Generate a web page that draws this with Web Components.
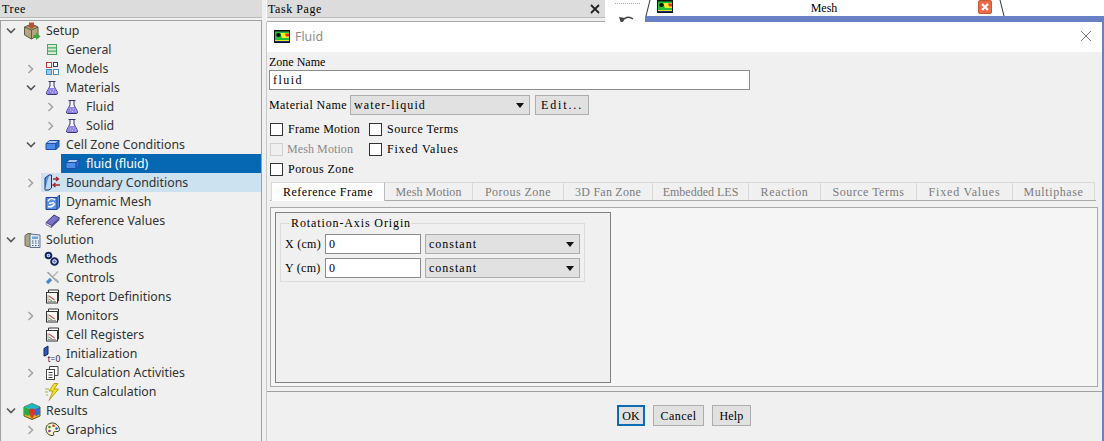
<!DOCTYPE html>
<html>
<head>
<meta charset="utf-8">
<title>Fluid</title>
<style>
  html, body { margin: 0; padding: 0; width: 1104px; height: 441px; overflow: hidden; background: #f0f0f0; }
</style>
</head>
<body>
<app-shell>
  <tree-panel slot="tree">
    <tree-row level="0" open icon="setup">Setup</tree-row>
    <tree-row level="1" icon="general">General</tree-row>
    <tree-row level="1" closed icon="models">Models</tree-row>
    <tree-row level="1" open icon="flask">Materials</tree-row>
    <tree-row level="2" closed icon="flask">Fluid</tree-row>
    <tree-row level="2" closed icon="flask">Solid</tree-row>
    <tree-row level="1" open icon="zone">Cell Zone Conditions</tree-row>
    <tree-row level="2" selected icon="zone">fluid (fluid)</tree-row>
    <tree-row level="1" closed hover icon="boundary">Boundary Conditions</tree-row>
    <tree-row level="1" icon="dynamic">Dynamic Mesh</tree-row>
    <tree-row level="1" icon="book">Reference Values</tree-row>
    <tree-row level="0" open icon="solution">Solution</tree-row>
    <tree-row level="1" icon="methods">Methods</tree-row>
    <tree-row level="1" icon="controls">Controls</tree-row>
    <tree-row level="1" icon="report">Report Definitions</tree-row>
    <tree-row level="1" closed icon="report">Monitors</tree-row>
    <tree-row level="1" icon="report">Cell Registers</tree-row>
    <tree-row level="1" icon="init">Initialization</tree-row>
    <tree-row level="1" closed icon="activities">Calculation Activities</tree-row>
    <tree-row level="1" icon="run">Run Calculation</tree-row>
    <tree-row level="0" open icon="results">Results</tree-row>
    <tree-row level="1" closed icon="graphics">Graphics</tree-row>
  </tree-panel>
  <top-strip slot="strip"></top-strip>
  <fluid-dialog slot="dialog"></fluid-dialog>
</app-shell>

<script>
// the reference uses a 6px-per-char bitmap serif, so stretch the serif to that pitch
const monoFont = '12px "Liberation Serif"';
const monoCss = `font: 12px/14px "Liberation Serif", serif;`;
const ctx = document.createElement('canvas').getContext('2d');
ctx.font = monoFont;
function fitMono(el) {
  const text = el.textContent.trim();
  if (!text) return;
  const spacing = (text.length * 6 - ctx.measureText(text).width) / text.length;
  el.style.letterSpacing = Math.max(spacing, 0).toFixed(3) + 'px';
}

const contourBody = `<rect width="16" height="13" fill="#10131a"/><rect x="1" y="1.500" width="14" height="8.500" fill="#1fbf3a"/><path d="M6 3h9v5H8z" fill="#f2ee1d"/><path d="M11 3.500h4v3h-3z" fill="#e8301c"/><ellipse cx="4.500" cy="5" rx="2.300" ry="2" fill="#0b0b0b"/><rect x="1" y="10" width="14" height="1" fill="#e6e61d"/><rect x="1" y="11" width="14" height="1" fill="#16267a"/>`;
const contour = `<svg width="16" height="13" viewBox="0 0 16 13">${contourBody}</svg>`;

const icons = {
  setup: `<svg width="18" height="18" viewBox="0 0 18 18"><path d="M1.500 5L8.500 2 15 5v8l-6.500 4L1.500 13z" fill="#b5a582" stroke="#5f5a44"/><path d="M1.500 5l7 3 6.500-3M8.500 8v9" fill="none" stroke="#5f5a44"/><path d="M6 .5h5v3h2L8.500 7 4 3.500h2z" fill="#b9502f"/><path d="M10.500 13H13v-2.500l4.500 4-4.500 3.500V16h-2.500z" fill="#3aa63c"/></svg>`,
  general: `<svg width="12" height="13" viewBox="0 0 12 13"><rect x="1.500" y="1.500" width="9" height="10" fill="#d9ecd8" stroke="#4da563"/><path d="M1.500 4.800h9M1.500 8.200h9" stroke="#4da563" stroke-width="1.200"/></svg>`,
  models: `<svg width="13" height="13" viewBox="0 0 13 13"><rect x=".5" y=".5" width="5" height="5" fill="#fff" stroke="#cf3d3d"/><rect x="7.500" y=".5" width="4" height="4" fill="#fff" stroke="#34396e"/><rect x=".5" y="7.500" width="5" height="5" fill="#9cc9ea" stroke="#3d8fd0"/><rect x="7.500" y="7.500" width="5" height="5" fill="#fff" stroke="#3d8fd0"/></svg>`,
  flask: `<svg width="14" height="16" viewBox="0 0 14 16"><path d="M3.500 1.500h7M5 1.500V6L1.500 12.500q-.5 2 1.500 2h8q2 0 1.500-2L9 6V1.500" fill="#f4f2ff" stroke="#34346a"/><path d="M3.800 8h6.400l2.200 5q0 1-1.200 1H3q-1.200 0-1.200-1z" fill="#8f83e8"/><path d="M5 11h.8M8 10h.8M7 12.500h.8M10 12h.8" stroke="#e9e6ff"/></svg>`,
  zone: `<svg width="15" height="12" viewBox="0 0 15 12"><path d="M1 4.500L4.500 1.500H14L11 4.500z" fill="#a9c8f5" stroke="#1e4fa8"/><path d="M1 4.500h10v6H1z" fill="#4d8de8" stroke="#1e4fa8"/><path d="M11 4.500L14 1.500v6l-3 3z" fill="#2f6ed0" stroke="#1e4fa8"/></svg>`,
  boundary: `<svg width="17" height="17" viewBox="0 0 17 17"><path d="M1 4l4-3v12l-4 3z" fill="#5a94e4" stroke="#17306e"/><path d="M5 1h2.500v13L5 16H1" fill="#bcd4f2" stroke="#17306e"/><path d="M9 5h5M12 3l2.500 2-2.500 2M9 11h7M11.500 9L9 11l2.500 2" fill="none" stroke="#a8262c" stroke-width="1.400"/></svg>`,
  dynamic: `<svg width="15" height="16" viewBox="0 0 15 16"><path d="M1 3.500h11L14.500 1v12L12 15.500H1z" fill="#5b8fe6" stroke="#1d3f95"/><path d="M12 3.500v12" stroke="#1d3f95"/><path d="M3 7c2-3 5-3 7-1M3 12.500c3 1 5 0 7-3M4 9.500l5-1" fill="none" stroke="#fff" stroke-width="1.400"/></svg>`,
  book: `<svg width="15" height="14" viewBox="0 0 15 14"><path d="M1 8.500L9 1l5.500 3-8 7.500z" fill="#7c74c8" stroke="#3f3a80"/><path d="M1 8.500l5.500 3v2L1 10.500z" fill="#eeecf8" stroke="#3f3a80" stroke-width=".7"/><path d="M6.500 11.500l8-7.500v2l-8 7.500z" fill="#4f4a90"/></svg>`,
  solution: `<svg width="17" height="16" viewBox="0 0 17 16"><path d="M1 3.500q3-3 6-2V14q-3 1.500-6-.5z" fill="#a9a48a" stroke="#6d6a50"/><path d="M6 2l10 1v12.500H6z" fill="#e4ecf4" stroke="#5f7085"/><path d="M8 4.500h6V7H8z" fill="#6fa8d8"/><path d="M8 9h1.500M11 9h1.500M14 9h1M8 11h1.500M11 11h1.500M14 11h1M8 13.500h1.500M11 13.500h1.500M14 13.500h1" stroke="#3f5f8a" stroke-width="1.200"/></svg>`,
  methods: `<svg width="16" height="16" viewBox="0 0 16 16"><g fill="#fff" stroke="#14245f" stroke-width="2"><circle cx="4.500" cy="4.500" r="2.800"/><circle cx="10.500" cy="10.500" r="3.300"/></g><circle cx="4.500" cy="4.500" r="1" fill="#3f6ad8"/><circle cx="10.500" cy="10.500" r="1.300" fill="#3f6ad8"/></svg>`,
  controls: `<svg width="15" height="15" viewBox="0 0 15 15"><path d="M2.500 2l9 9" stroke="#9a9a9a" stroke-width="1.500"/><path d="M13 1.500L8 6.500" stroke="#b5b5b5" stroke-width="1.500"/><path d="M2 13l4-4" stroke="#4a86c8" stroke-width="3.200"/><path d="M10 9l3.500 3.500" stroke="#a8a8a8" stroke-width="2"/></svg>`,
  report: `<svg width="15" height="15" viewBox="0 0 15 15"><path d="M3.500 3.500V1h10v11h-1" fill="#fff" stroke="#333"/><rect x="1.500" y="3.500" width="11" height="10.500" fill="#fbf9f4" stroke="#333"/><path d="M3 6v6.500h8" fill="none" stroke="#777" stroke-width=".7"/><path d="M4 7l5.500 4" stroke="#d6464a" stroke-width="1.100"/><path d="M4 10l3 2" stroke="#4aa052"/></svg>`,
  init: `<svg width="18" height="18" viewBox="0 0 18 18"><path d="M1 3.500L5 1v8L2 11H1z" fill="#2a58c4" stroke="#14245f"/><text x="4.500" y="17" font-family="Noto Sans" font-size="8.500" fill="#1a2a55">t=0</text></svg>`,
  activities: `<svg width="14" height="14" viewBox="0 0 14 14"><path d="M4.500 3.500v-3h8.500v9H9.500" fill="#fff" stroke="#444"/><rect x="1.500" y="3.500" width="8" height="10" fill="#fff" stroke="#444"/><path d="M3.500 6.500h4M3.500 9h4M3.500 11.500h4" stroke="#444"/></svg>`,
  run: `<svg width="16" height="18" viewBox="0 0 16 18"><path d="M10 .5L5 8h4l-4 9.500L14.500 6H10l4-5.500z" fill="#f5e11d" stroke="#a8900f" stroke-width=".8"/><path d="M1 6h4M1 9h3M2 12h2" stroke="#b5a84a"/></svg>`,
  results: `<svg width="18" height="18" viewBox="0 0 18 18"><path d="M1 5l8-3.500L17 5v9l-8 3.500L1 14z" fill="#e8b21d" stroke="#5a5a2a"/><path d="M1 5l8-3.500L17 5 9 8z" fill="#1fb8c9"/><path d="M1 5l8 3v3L5 14 1 12z" fill="#2cab44"/><path d="M17 5L9 8v3l4 3 4-2z" fill="#2a6de0"/><circle cx="9" cy="9.500" r="3" fill="#e5301f"/><path d="M6 12l3 5 3-5z" fill="#d4471c"/></svg>`,
  graphics: `<svg width="15" height="15" viewBox="0 0 15 15"><path d="M7.500 1C3 1 1 4 1 7c0 4 3 6.500 6 6.500 2 0 2-1 1.500-2-.4-1 .5-2 2-2h1.500c1.500 0 2.500-.5 2.500-2C14 4 11 1 7.500 1z" fill="#fbf4cc" stroke="#2d3a1e"/><circle cx="4.500" cy="5" r="1.300" fill="#2c8f3a"/><circle cx="8.500" cy="3.800" r="1.300" fill="#d33a2c"/><circle cx="11.500" cy="6.500" r="1.200" fill="#2a55c8"/><circle cx="4.500" cy="9" r="1.300" fill="#7a3ba8"/></svg>`
};

class AppShell extends HTMLElement {
  constructor() {
    super();
    this.attachShadow({mode: 'open'}).innerHTML = `
      <style>
        :host { display: grid; grid-template-columns: 266px 838px; grid-template-rows: 22px 419px; width: 1104px; height: 441px; background: #f0f0f0; overflow: hidden; }
        .left { grid-row: 1 / 3; min-height: 0; }
        .strip, .dlg { min-width: 0; min-height: 0; }
      </style>
      <div class="left"><slot name="tree"></slot></div>
      <div class="strip"><slot name="strip"></slot></div>
      <div class="dlg"><slot name="dialog"></slot></div>`;
  }
}

class TreePanel extends HTMLElement {
  constructor() {
    super();
    this.attachShadow({mode: 'open'}).innerHTML = `
      <style>
        :host { display: flex; flex-direction: column; height: 441px; }
        .head { height: 17px; margin-right: 4px; background: #dcdcdc; border-bottom: 1px solid #b9b9b9; padding-left: 2px; display: flex; align-items: center; }
        .body { flex: 1; margin: 2px 4px 0 0; background: #f0f0f0; border: 1px solid #a0a0a0; border-bottom: 0; overflow: hidden; }
      </style>
      <div class="head"><mono-label>Tree</mono-label></div>
      <div class="body"><slot></slot></div>`;
  }
}

class TreeRow extends HTMLElement {
  constructor() {
    super();
    const level = +this.getAttribute('level');
    const arrow = this.hasAttribute('open')
      ? `<svg width="10" height="8" viewBox="0 0 10 8"><path d="M1 1.500l4 4 4-4" fill="none" stroke="#555" stroke-width="1.600"/></svg>`
      : this.hasAttribute('closed')
        ? `<svg width="8" height="10" viewBox="0 0 8 10"><path d="M1.500 1l4 4-4 4" fill="none" stroke="#a6a6a6" stroke-width="1.600"/></svg>`
        : '';
    this.attachShadow({mode: 'open'}).innerHTML = `
      <style>
        :host { display: block; height: 19px; padding-left: ${4 + level * 20}px; font: 12.35px/19px "Noto Sans", sans-serif; color: #333; white-space: nowrap; }
        .row { display: flex; align-items: center; height: 19px; }
        .arrow { width: 12px; margin-right: 4px; flex: none; display: flex; justify-content: center; align-items: center; }
        .box { display: flex; flex: 1; height: 19px; }
        .icon { width: 25px; padding-right: 3px; box-sizing: border-box; height: 19px; flex: none; display: flex; align-items: center; justify-content: center; }
        :host([selected]) .box { background: #0667b3; color: #fff; }
        :host([hover]) .box { background: #cce2f1; }
      </style>
      <div class="row">
        <span class="arrow">${arrow}</span>
        <div class="box"><span class="icon">${icons[this.getAttribute('icon')] || ''}</span><span><slot></slot></span></div>
      </div>`;
  }
}

class TopStrip extends HTMLElement {
  constructor() {
    super();
    this.attachShadow({mode: 'open'}).innerHTML = `
      <style>
        :host { display: flex; height: 22px; background: #fff; overflow: hidden; }
        .taskwrap { width: 338px; margin-left: 1px; flex: none; height: 21px; background: #f0f0f0; border-bottom: 1px solid #a8a8a8; }
        .task { height: 17px; background: #dcdcdc; border-bottom: 1px solid #b9b9b9; display: flex; justify-content: space-between; align-items: center; padding: 0 5px 0 1px; }
        .tool { width: 40px; flex: none; }
        .dots { margin: 3px 0 0 10px; width: 25px; border-top: 1px dotted #a8a8a8; }
        .undo { display: block; margin: 10px 0 0 14px; }
        .tabs { flex: 1; display: flex; flex-direction: column; }
        .tab { height: 16px; width: 360px; flex: none; display: flex; align-items: center; background: #fff; position: relative; }
        .tab svg.c { margin: -3px 0 0 12px; flex: none; }
        .name { flex: 1; text-align: center; margin: -3px 3px 0 0; }
        .close { width: 14px; height: 14px; margin: -2px 13px 0 0; background: #ee6a45; border: 1px solid #c9593a; border-radius: 2px; box-sizing: border-box; display: flex; }
        .bar { height: 6px; background: #6781c4; }
        .slant { position: absolute; top: 0; }
      </style>
      <div class="taskwrap"><div class="task"><mono-label>Task Page</mono-label>
        <svg width="10" height="10" viewBox="0 0 10 10"><path d="M1 1l8 8M9 1L1 9" stroke="#222" stroke-width="1.800"/></svg></div></div>
      <div class="tool"><div class="dots"></div><svg class="undo" width="16" height="9" viewBox="0 0 16 9"><path d="M3 8c2-5 7-6 11-3" fill="none" stroke="#444" stroke-width="1.400"/><path d="M0 3l6 1-4 5z" fill="#444"/></svg></div>
      <div class="tabs">
        <div class="tab">
          <svg class="slant" style="left:0" width="6" height="16" viewBox="0 0 6 16"><path d="M5 0L1 16" stroke="#333"/></svg>
          <svg class="c" width="16" height="13" viewBox="0 0 16 13">${contourBody}</svg>
          <span class="name"><mono-label>Mesh</mono-label></span>
          <span class="close"><svg width="12" height="12" viewBox="0 0 12 12"><path d="M3 3l6 6M9 3L3 9" stroke="#fff" stroke-width="2.200"/></svg></span>
          <svg class="slant" style="right:0" width="6" height="16" viewBox="0 0 6 16"><path d="M1 0l4 16" stroke="#333"/></svg>
        </div>
        <div class="bar"></div>
      </div>`;
  }
}

class MonoLabel extends HTMLElement {
  constructor() {
    super();
    this.attachShadow({mode: 'open'}).innerHTML = `
      <style>:host { display: inline-block; ${monoCss} color: #000; white-space: nowrap; }</style><slot></slot>`;
  }
  connectedCallback() { fitMono(this); }
}

class TextField extends HTMLElement {
  constructor() {
    super();
    this.attachShadow({mode: 'open'}).innerHTML = `
      <style>:host { display: flex; align-items: center; box-sizing: border-box; height: 20px; background: #fff; border: 1px solid #8c8c8c; ${monoCss} color: #000; padding-left: 3px; }</style><slot></slot>`;
  }
  connectedCallback() { fitMono(this); }
}

class ComboBox extends HTMLElement {
  constructor() {
    super();
    this.attachShadow({mode: 'open'}).innerHTML = `
      <style>
        :host { display: flex; align-items: center; justify-content: space-between; box-sizing: border-box; height: 20px; background: #e1e1e1; border: 1px solid #adadad; ${monoCss} color: #000; padding: 0 5px 0 3px; }
        i { width: 0; height: 0; border: 4px solid transparent; border-top: 5px solid #111; border-bottom: 0; }
      </style><span><slot></slot></span><i></i>`;
  }
  connectedCallback() { fitMono(this); }
}

class PushButton extends HTMLElement {
  constructor() {
    super();
    this.attachShadow({mode: 'open'}).innerHTML = `
      <style>
        :host { display: flex; align-items: center; justify-content: center; box-sizing: border-box; height: 21px; background: #e1e1e1; border: 1px solid #adadad; ${monoCss} color: #000; }
        :host([default]) { border: 2px solid #0a6cb5; }
      </style><slot></slot>`;
  }
  connectedCallback() { fitMono(this); }
}

class CheckItem extends HTMLElement {
  constructor() {
    super();
    this.attachShadow({mode: 'open'}).innerHTML = `
      <style>
        :host { display: flex; align-items: center; gap: 5px; height: 20px; ${monoCss} color: #000; white-space: nowrap; }
        i { width: 11px; height: 11px; background: #fff; border: 1px solid #333; flex: none; }
        :host([disabled]) { color: #8a8a8a; gap: 4px; }
        :host([disabled]) i { border-color: #d0d0d0; background: #efefef; }
      </style><i></i><span><slot></slot></span>`;
  }
  connectedCallback() { fitMono(this); }
}

class TabItem extends HTMLElement {
  constructor() {
    super();
    this.attachShadow({mode: 'open'}).innerHTML = `
      <style>
        :host { display: flex; align-items: center; justify-content: center; box-sizing: border-box; height: 18px; border-top: 1px solid #d9d9d9; border-right: 1px solid #d9d9d9; ${monoCss} color: #7c7c7c; white-space: nowrap; }
        :host([active]) { height: 19px; background: #fff; color: #000; border-left: 1px solid #d9d9d9; border-right: 1px solid #bdbdbd; }
      </style><slot></slot>`;
  }
  connectedCallback() { fitMono(this); }
}

class TabBar extends HTMLElement {
  constructor() {
    super();
    this.attachShadow({mode: 'open'}).innerHTML = `
      <style>:host { display: flex; height: 19px; box-sizing: border-box; border-bottom: 1px solid #a9a9a9; padding-left: 1px; }</style><slot></slot>`;
  }
}

class GroupBox extends HTMLElement {
  constructor() {
    super();
    this.attachShadow({mode: 'open'}).innerHTML = `
      <style>
        :host { display: block; position: relative; box-sizing: border-box; border: 1px solid #dcdcdc; padding: 10px 4px 0; }
        mono-label { position: absolute; top: -8px; left: 9px; background: #f0f0f0; padding: 0 1px; }
      </style><mono-label>${this.getAttribute('caption')}</mono-label><slot></slot>`;
  }
}

class FluidDialog extends HTMLElement {
  constructor() {
    super();
    this.attachShadow({mode: 'open'}).innerHTML = `
      <style>
        :host { display: flex; flex-direction: column; width: 838px; height: 419px; box-sizing: border-box; background: #f0f0f0; border-left: 1px solid #c8c8c8; border-right: 2px solid #6781c4; }
        .title { height: 30px; flex: none; box-sizing: border-box; background: #fff; display: flex; align-items: center; padding: 0 10px 2px 7px; gap: 5px; font: 12.35px "Noto Sans", sans-serif; color: #8d8d8d; }
        .title .t { flex: 1; }
        .content { padding: 3px 4px 0 2px; display: flex; flex-direction: column; flex: 1; min-height: 0; }
        .zone { width: 481px; margin-top: 1px; }
        .mat { display: flex; align-items: center; gap: 2px; margin-top: 5px; height: 20px; }
        .checks { display: grid; grid-template-columns: 99px auto; justify-content: start; margin-top: 4px; padding-left: 1px; }
        tab-bar { margin-top: 3px; margin-left: 1px; width: 826px; }
        .page { margin: 6px 0 0 1px; height: 180px; box-sizing: border-box; border: 1px solid #a9a9a9; background: #f5f5f5; padding: 4px 0 0 4px; }
        .pane { width: 336px; height: 171px; box-sizing: border-box; border: 1px solid #808080; background: #f0f0f0; padding: 10px 0 0 4px; }
        .axis { display: grid; grid-template-columns: 36px 96px 155px; gap: 4px; align-items: center; }
        .rule { height: 1px; margin: 4px -4px 0 -2px; background: #a0a0a0; flex: none; }
        .buttons { display: flex; justify-content: center; gap: 8px; padding-top: 13px; margin-left: 1px; }
      </style>
      <div class="title">${contour}<span class="t">Fluid</span>
        <svg width="12" height="12" viewBox="0 0 12 12"><path d="M1 1l10 10M11 1L1 11" stroke="#777" fill="none"/></svg></div>
      <div class="content">
        <mono-label>Zone Name</mono-label>
        <text-field class="zone">fluid</text-field>
        <div class="mat">
          <mono-label style="width:79px">Material Name</mono-label>
          <combo-box style="width:180px">water-liquid</combo-box>
          <push-button style="width:54px;height:20px;margin-left:3px">Edit...</push-button>
        </div>
        <div class="checks">
          <check-item>Frame Motion</check-item><check-item>Source Terms</check-item>
          <check-item disabled>Mesh Motion</check-item><check-item>Fixed Values</check-item>
          <check-item>Porous Zone</check-item>
        </div>
        <tab-bar>
          <tab-item active style="width:114px">Reference Frame</tab-item>
          <tab-item style="width:88px">Mesh Motion</tab-item>
          <tab-item style="width:91px">Porous Zone</tab-item>
          <tab-item style="width:89px">3D Fan Zone</tab-item>
          <tab-item style="width:96px">Embedded LES</tab-item>
          <tab-item style="width:72px">Reaction</tab-item>
          <tab-item style="width:96px">Source Terms</tab-item>
          <tab-item style="width:96px">Fixed Values</tab-item>
          <tab-item style="width:82px">Multiphase</tab-item>
        </tab-bar>
        <div class="page">
          <div class="pane">
            <group-box caption="Rotation-Axis Origin" style="width:305px;height:59px">
              <div class="axis">
                <mono-label>X (cm)</mono-label><text-field>0</text-field><combo-box>constant</combo-box>
                <mono-label>Y (cm)</mono-label><text-field>0</text-field><combo-box>constant</combo-box>
              </div>
            </group-box>
          </div>
        </div>
        <div class="rule"></div>
        <div class="buttons">
          <push-button default style="width:28px">OK</push-button>
          <push-button style="width:51px">Cancel</push-button>
          <push-button style="width:39px">Help</push-button>
        </div>
      </div>`;
  }
}

customElements.define('mono-label', MonoLabel);
customElements.define('text-field', TextField);
customElements.define('combo-box', ComboBox);
customElements.define('push-button', PushButton);
customElements.define('check-item', CheckItem);
customElements.define('tab-item', TabItem);
customElements.define('tab-bar', TabBar);
customElements.define('group-box', GroupBox);
customElements.define('app-shell', AppShell);
customElements.define('tree-panel', TreePanel);
customElements.define('tree-row', TreeRow);
customElements.define('top-strip', TopStrip);
customElements.define('fluid-dialog', FluidDialog);
</script>
</body>
</html>
